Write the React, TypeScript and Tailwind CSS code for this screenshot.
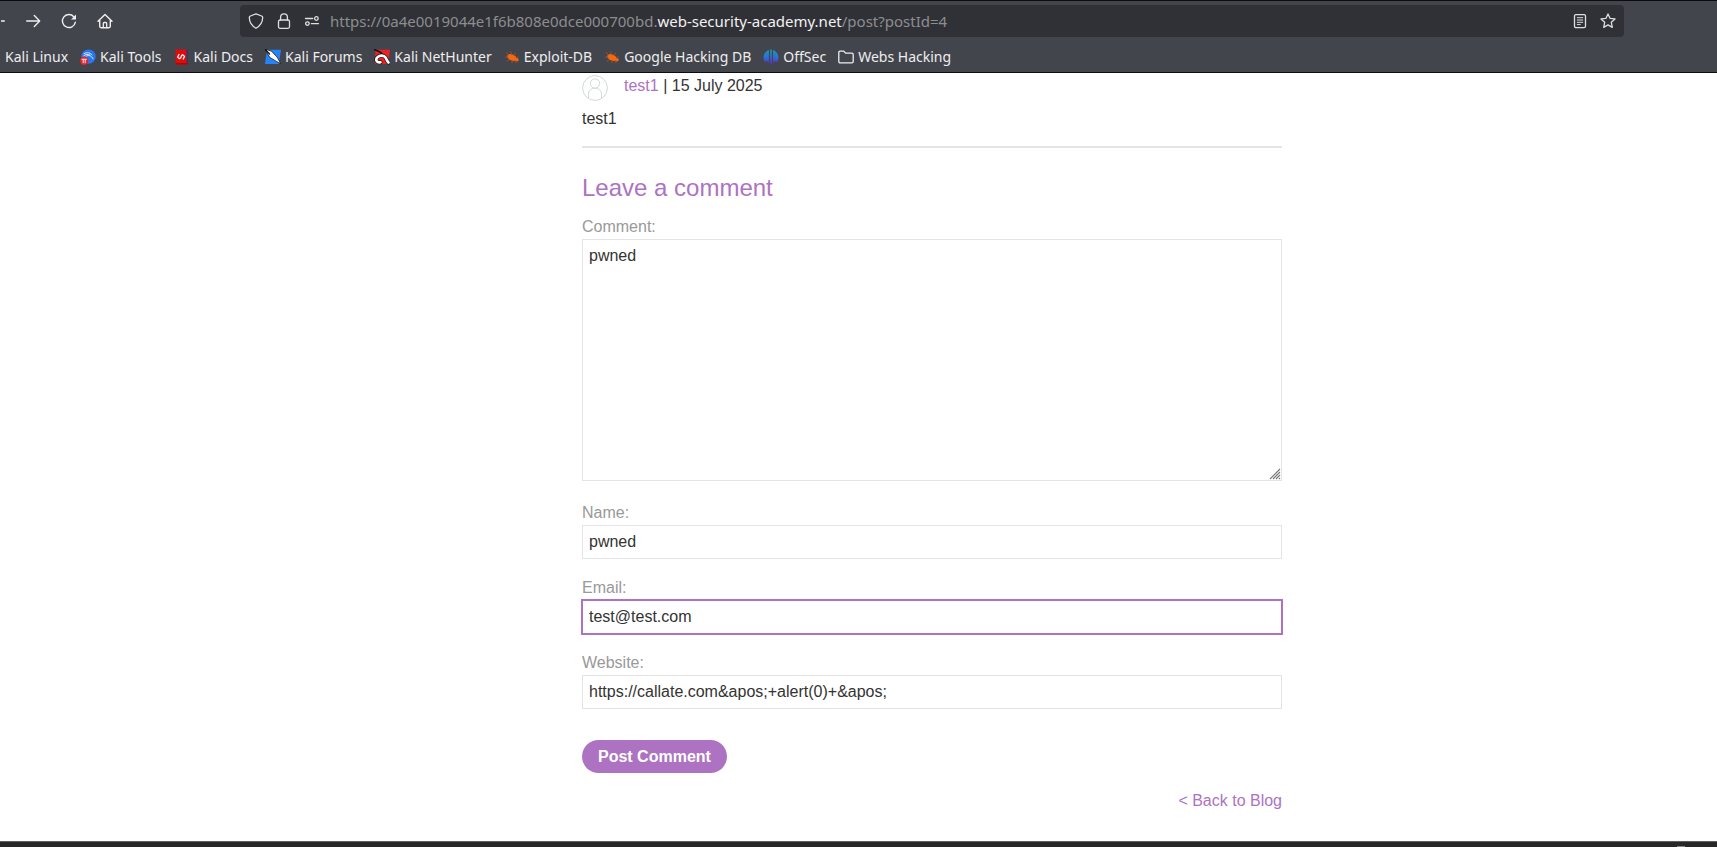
import React from "react";

type IconProps = { children: React.ReactNode; className?: string };

function Icon({ children, className = "" }: IconProps) {
  return (
    <svg
      viewBox="0 0 16 16"
      className={`size-4 shrink-0 ${className}`}
      fill="none"
      stroke="currentColor"
      strokeWidth="1.3"
      strokeLinecap="round"
      strokeLinejoin="round"
      aria-hidden="true"
    >
      {children}
    </svg>
  );
}

function KaliToolsIcon() {
  return (
    <Icon>
      <circle cx="8.500" cy="7.600" r="7.200" fill="#2777f0" stroke="none" />
      <path d="M4 4.600c3-1.600 6-1 8 1.200M6 7.200c2.500-1.400 5.500-.8 7 2.600M3.500 7c2-2 4.500-2 6.500-1" stroke="#dbe9ff" strokeWidth="1" />
      <circle cx="4.200" cy="11.800" r="4.200" fill="#e3242b" stroke="none" />
      <path d="M2 10.300h4.400M3.200 10.300v3.500M5.200 10.300v3.500" stroke="#fff" strokeWidth="0.9" />
    </Icon>
  );
}

function KaliDocsIcon() {
  return (
    <Icon>
      <path d="M1.500.5H14v15H1.500z" fill="#e00b0b" stroke="none" />
      <path d="M1.500 14H14v1.500H1.500z" fill="#a80808" stroke="none" />
      <path d="M12.500.5H14v13h-1.500z" fill="#1b3f7a" stroke="none" />
      <path d="M5 5.500L3.600 8l2 1.700M8.600 5.700l2 1.700L9.200 10M6.500 9.200l1.200-3" stroke="#fff" strokeWidth="1.200" />
    </Icon>
  );
}

function KaliForumsIcon() {
  return (
    <Icon>
      <path d="M2 .8h14L13.800 15H0z" fill="#2683fb" stroke="none" />
      <path d="M0 0l6.500 2.200L12 8l3.800 6.800-4.600-2.600L5 8.500z" fill="#fff" stroke="#111" strokeWidth="0.7" />
      <path d="M0 0l4.500 5" stroke="#111" strokeWidth="1.300" />
    </Icon>
  );
}

function KaliNetHunterIcon() {
  return (
    <Icon>
      <path d="M1.500.8H16L13.800 15H1z" fill="#ed2024" stroke="none" />
      <path d="M0 .5l5.500 2.200 3 2.500" stroke="#111" strokeWidth="1.600" />
      <path d="M6.500 13.200C2.500 14 1 10.500 3.500 8.200c2.500-2.300 6.500-2 8 .3 1.200 1.800 1.500 3.500 3 5" stroke="#111" strokeWidth="4" />
      <path d="M6.500 13.200C2.500 14 1 10.500 3.500 8.200c2.500-2.300 6.500-2 8 .3 1.200 1.800 1.500 3.500 3 5" stroke="#fff" strokeWidth="2.600" />
    </Icon>
  );
}

function BugIcon() {
  return (
    <Icon>
      <ellipse cx="8" cy="8.500" rx="5" ry="3.100" transform="rotate(24 8 8.500)" fill="#f26a10" stroke="none" />
      <circle cx="13" cy="10.800" r="1.700" fill="#f26a10" stroke="none" />
      <path d="M4.500 6L2.500 3.500M7.500 5.500L6.800 2.800M10 6.500l1.500-2.500M4 8.500L1.500 8M5.500 10.500l-2.500 1.500M8.500 11.500l-.5 2.200M11 12l1 1.800M12.500 9l1.700-1.500" stroke="#a0522d" strokeWidth="0.9" />
    </Icon>
  );
}

function OffSecIcon() {
  return (
    <Icon>
      <defs>
        <linearGradient id="offsec" x1="0" y1="0" x2="0" y2="1">
          <stop offset="0" stopColor="#13a3ad" />
          <stop offset="0.500" stopColor="#2b72dc" />
          <stop offset="1" stopColor="#6a20d0" />
        </linearGradient>
      </defs>
      <path
        d="M7.200.5h1.600v15H7.200zM5.900 1v12.500C4.800 13.500 4.500 12 3.800 12V2C4.500 1.500 5.200 1.200 5.900 1zM10.100 1v12.500c1.100 0 1.400-1.500 2.100-1.500V2C11.500 1.500 10.800 1.200 10.100 1zM3.900 2C-.2 5-.2 10.500 2.200 12.800c.6.300 1.200-.3 1.700-.8zM12.100 2c4.100 3 4.100 8.500 1.700 10.800-.6.300-1.200-.3-1.700-.8z"
        fill="url(#offsec)"
        stroke="none"
      />
    </Icon>
  );
}

function FolderIcon() {
  return (
    <Icon>
      <path d="M.8 12.500V3.500c0-.8.500-1.300 1.300-1.300h3.700l1.700 2h6.200c.9 0 1.500.6 1.500 1.400v6.900c0 .8-.6 1.400-1.400 1.400H2.200c-.8 0-1.400-.6-1.400-1.400z" />
    </Icon>
  );
}

const bookmarks = [
  { label: "Kali Tools", icon: <KaliToolsIcon /> },
  { label: "Kali Docs", icon: <KaliDocsIcon /> },
  { label: "Kali Forums", icon: <KaliForumsIcon /> },
  { label: "Kali NetHunter", icon: <KaliNetHunterIcon /> },
  { label: "Exploit-DB", icon: <BugIcon /> },
  { label: "Google Hacking DB", icon: <BugIcon /> },
  { label: "OffSec", icon: <OffSecIcon /> },
  { label: "Webs Hacking", icon: <FolderIcon /> },
];

function BrowserBar() {
  return (
    <header className="overflow-hidden border-y border-[#0c0c0f] bg-[#43454d] font-['Noto_Sans',sans-serif] text-[#eeeeee]">
      <div className="flex h-10 items-center">
        <nav className="flex w-60 shrink-0 items-center gap-5 pl-px" aria-label="Navigation">
          <button type="button" aria-label="Back" className="w-1 shrink-0 overflow-hidden">
            <Icon className="-ml-3"><path d="M1.500 8h13.800M7.500 2.500L1.500 8l6 5.500" strokeWidth="1.400" /></Icon>
          </button>
          <button type="button" aria-label="Forward">
            <Icon><path d="M1.700 8h13M9.300 2.600L14.700 8l-5.400 5.400" strokeWidth="1.400" /></Icon>
          </button>
          <button type="button" aria-label="Reload">
            <Icon>
              <path d="M14.300 9.300A6.500 6.500 0 1 1 12.800 3.700" strokeWidth="1.400" />
              <path d="M15 1.500v5h-5z" fill="currentColor" stroke="none" />
            </Icon>
          </button>
          <button type="button" aria-label="Home">
            <Icon>
              <path d="M1 8.300L8 1.400l7 6.900M2.700 7v6.300c0 .9.500 1.400 1.400 1.400h7.800c.9 0 1.400-.5 1.400-1.400V7" strokeWidth="1.400" />
              <path d="M6.300 14.500v-4c0-.6.400-1 1-1h1.400c.6 0 1 .4 1 1v4" />
            </Icon>
          </button>
        </nav>
        <div className="mr-[93px] flex h-8 min-w-0 flex-1 items-center rounded bg-[#303136] px-2">
          <div className="flex shrink-0 items-center gap-3 text-[#dedede]">
            <Icon><path d="M8 .9l5.600 2.100c.7.300 1.100.8 1.100 1.600-.1 4.600-2.200 8.200-6.700 10.700C3.500 12.800 1.400 9.200 1.300 4.600c0-.8.400-1.300 1.100-1.600z" /></Icon>
            <Icon>
              <rect x="2.500" y="7" width="11" height="8.300" rx="1.500" />
              <path d="M4.600 7V4.200a3.400 3.400 0 0 1 6.800 0V7" />
            </Icon>
            <Icon>
              <path d="M1.500 5.500h7.200M7.300 10.600h7.200" />
              <circle cx="12.400" cy="5.500" r="1.800" />
              <circle cx="3.400" cy="10.600" r="1.800" />
            </Icon>
          </div>
          <p className="ml-[10px] min-w-0 flex-1 truncate text-[15px] text-[#8d8d8f]">
            https://0a4e0019044e1f6b808e0dce000700bd.
            <span className="text-[#f2f2f2]">web-security-academy.net</span>/post?postId=4
          </p>
          <div className="flex shrink-0 items-center gap-3 text-[#dedede]">
            <button type="button" aria-label="Reader view">
              <Icon>
                <rect x="2.500" y="1.700" width="11" height="13" rx="1.400" />
                <path d="M5.300 4.700h5.400M5.300 7h5.400M5.300 9.300h5.400M5.300 11.600h3" strokeWidth="1" />
              </Icon>
            </button>
            <button type="button" aria-label="Bookmark this page">
              <Icon><path d="M8 .9l2 4.400 5 .6-3.700 3.400 1 5.100L8 11.900l-4.300 2.500 1-5.100L1 5.900l5-.6z" /></Icon>
            </button>
          </div>
        </div>
      </div>
      <nav className="flex h-[31px] items-center gap-3 whitespace-nowrap pl-[5px] text-sm" aria-label="Bookmarks">
        <a href="#kali-linux">Kali Linux</a>
        {bookmarks.map(({ label, icon }) => (
          <a key={label} href={`#${label}`} className="flex items-center gap-1">
            {icon}
            {label}
          </a>
        ))}
      </nav>
    </header>
  );
}

const fieldStyle = "block w-full border bg-white px-[6px] text-base text-[#333332] outline-none";
const labelStyle = "block h-6 leading-6 text-[#999999]";

type FieldProps = { id: string; label: string; type: string; value: string; active?: boolean };

function Field({ id, label, type, value, active }: FieldProps) {
  const border = active ? "border-[#ad73c2] ring-1 ring-[#ad73c2]" : "border-[#e4e4e4]";
  return (
    <div>
      <label htmlFor={id} className={labelStyle}>{label}</label>
      <input id={id} type={type} defaultValue={value} className={`${fieldStyle} ${border} h-[34px]`} />
    </div>
  );
}

export default function App() {
  return (
    <div className="flex min-h-screen flex-col bg-white font-['Liberation_Sans',Arial,sans-serif] text-base text-[#333332]">
      <BrowserBar />
      <main className="flex-1 pl-[147px]">
        <div className="mx-auto max-w-[700px]">
          <section className="border-b-2 border-[#e4e4e4] pt-px pb-[15px]">
            <div className="flex h-[30px] gap-4">
              <svg viewBox="0 0 26 26" className="mt-px size-[26px]" fill="none" stroke="#d0d8d8" aria-hidden="true">
                <circle cx="13" cy="13" r="12.400" />
                <circle cx="13" cy="8.500" r="4.700" />
                <path d="M6.500 23.500v-4c0-4 2.500-6.300 6.500-6.300s6.500 2.300 6.500 6.300v4" />
              </svg>
              <p className="leading-6"><a href="#author" className="text-[#ad73c2]">test1</a> | 15 July 2025</p>
            </div>
            <p className="pt-[3px] leading-6">test1</p>
          </section>
          <form onSubmit={(event) => event.preventDefault()}>
            <h2 className="pt-6 text-2xl text-[#ad73c2]">Leave a comment</h2>
            <div className="mt-[11px] flex flex-col gap-[17px]">
              <div className="pb-[3px]">
                <label htmlFor="comment" className={labelStyle}>Comment:</label>
                <div className="relative">
                  <textarea
                    id="comment"
                    defaultValue="pwned"
                    className={`${fieldStyle} h-[242px] resize-y border-[#e4e4e4] py-1 [&::-webkit-resizer]:bg-transparent`}
                  />
                  <svg
                    viewBox="0 0 12 12"
                    className="pointer-events-none absolute right-px bottom-px size-3 bg-white"
                    stroke="#777777"
                    strokeWidth="1.100"
                    aria-hidden="true"
                  >
                    <path d="M1 11L11 1M4 11l7-7M7 11l4-4M10 11l1-1" />
                  </svg>
                </div>
              </div>
              <Field id="name" label="Name:" type="text" value="pwned" />
              <Field id="email" label="Email:" type="email" value="test@test.com" active />
              <Field id="website" label="Website:" type="text" value={"https://callate.com&apos;+alert(0)+&apos;"} />
            </div>
            <button type="submit" className="mt-[31px] h-[33px] rounded-full bg-[#ad73c2] px-4 font-bold text-white">
              Post Comment
            </button>
          </form>
          <div className="pt-4 text-right leading-6">
            <a href="#blog" className="text-[#ad73c2]">&lt; Back to Blog</a>
          </div>
        </div>
      </main>
      <footer className="flex h-[6px] items-end border-t border-[#5d615f] bg-[#282828] pr-8">
        <div className="ml-auto h-px w-2 bg-[#8a8a8a]" />
      </footer>
    </div>
  );
}
